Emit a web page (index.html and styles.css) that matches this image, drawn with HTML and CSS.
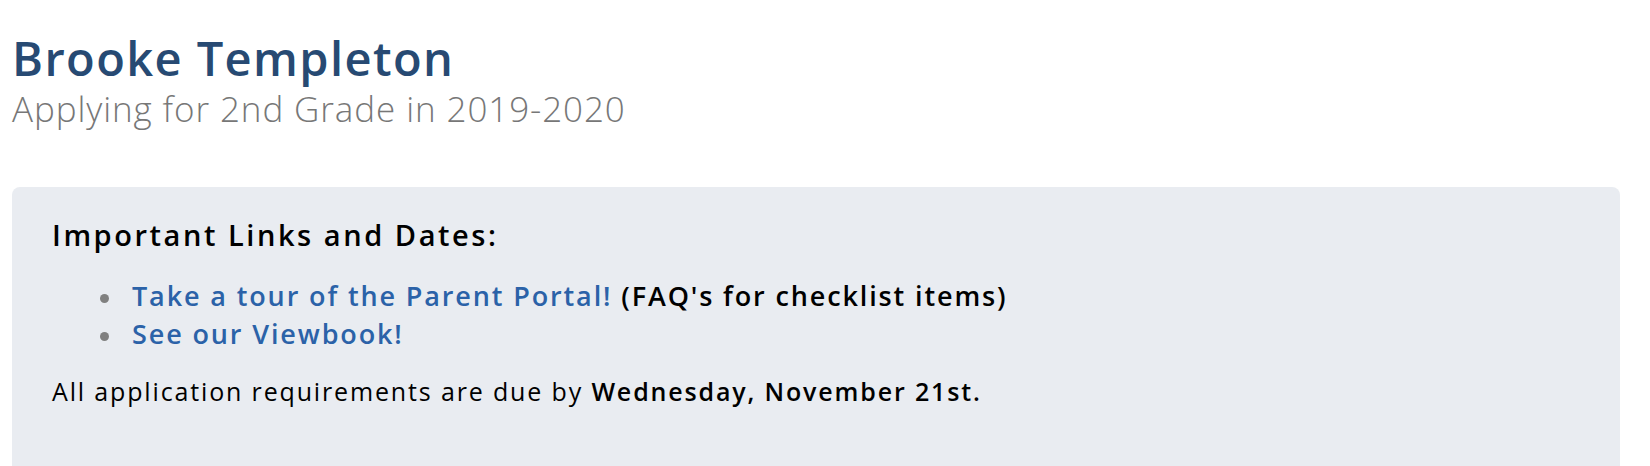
FILE: index.html
```html
<!DOCTYPE html>
<html lang="en">
<head>
  <meta charset="UTF-8" />
  <title>Brooke Templeton</title>
  <link rel="stylesheet" href="styles.css">
</head>
<body>
  <header class="applicant">
    <h1 class="applicant-name">Brooke Templeton</h1>
    <p class="applicant-grade">Applying for 2nd Grade in 2019-2020</p>
  </header>

  <section class="notice">
    <h2 class="notice-title">Important Links and Dates:</h2>
    <ul class="notice-links">
      <li><a href="#">Take a tour of the Parent Portal!</a> <strong>(FAQ's for checklist items)</strong></li>
      <li><a href="#">See our Viewbook!</a></li>
    </ul>
    <p class="notice-due">All application requirements are due by <strong>Wednesday, November 21st.</strong></p>
  </section>
</body>
</html>
```

FILE: styles.css
```css
body {
  font-family: "Open Sans", Lato, Arial, sans-serif;
  margin: 0;
  padding: 0 30px 0 12px;
  background-color: #ffffff;
  color: #000000;
}

.applicant {
  padding-top: 28px;
}

.applicant-name {
  margin: 0;
  font-size: 47px;
  font-weight: 600;
  line-height: 60px;
  letter-spacing: 1.4px;
  color: #274a73;
}

.applicant-grade {
  margin: 0;
  font-size: 35px;
  font-weight: 300;
  line-height: 42px;
  letter-spacing: 0.9px;
  color: #777777;
}

.notice {
  margin-top: 57px;
  background-color: #e9ecf1;
  border-radius: 8px 8px 0 0;
  padding: 28px 40px 56px;
}

.notice-title {
  margin: 0 0 22px;
  font-size: 29px;
  font-weight: 600;
  line-height: 40px;
  letter-spacing: 2.55px;
}

.notice-links {
  margin: 0 0 19px;
  padding-left: 80px;
  list-style: none;
  font-size: 27px;
  font-weight: 600;
  line-height: 38px;
  letter-spacing: 1.87px;
}

.notice-links li::before {
  content: "";
  display: inline-block;
  width: 9px;
  height: 9px;
  margin: 0 23px 0 -32px;
  border-radius: 50%;
  background-color: #808080;
  vertical-align: middle;
}

.notice-links a {
  color: #2b62a8;
  text-decoration: none;
}

.notice-links strong {
  font-weight: 600;
}

.notice-due {
  margin: 0;
  font-size: 25px;
  line-height: 38px;
  letter-spacing: 1.85px;
}

.notice-due strong {
  font-weight: 600;
}
```
